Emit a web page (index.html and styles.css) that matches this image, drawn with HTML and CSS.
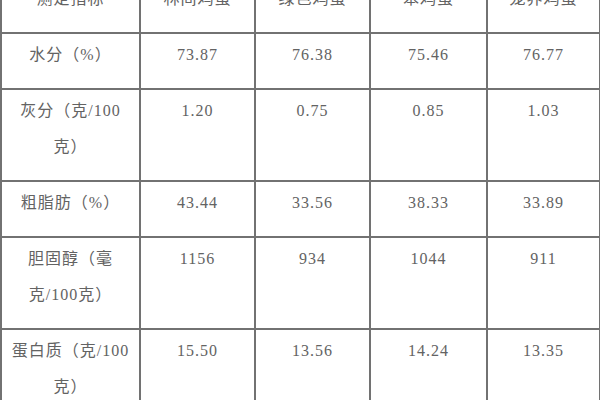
FILE: index.html
```html
<!DOCTYPE html>
<html lang="zh-CN">
<head>
<meta charset="utf-8">
<link rel="stylesheet" href="styles.css">
</head>
<body>
<table class="data">
  <colgroup>
    <col class="c1"><col class="c2"><col class="c3"><col class="c4"><col class="c5">
  </colgroup>
  <tr><td>测定指标</td><td>林间鸡蛋</td><td>绿色鸡蛋</td><td>笨鸡蛋</td><td>笼养鸡蛋</td></tr>
  <tr><td>水分（%）</td><td>73.87</td><td>76.38</td><td>75.46</td><td>76.77</td></tr>
  <tr><td>灰分（克/100<br>克）</td><td>1.20</td><td>0.75</td><td>0.85</td><td>1.03</td></tr>
  <tr><td>粗脂肪（%）</td><td>43.44</td><td>33.56</td><td>38.33</td><td>33.89</td></tr>
  <tr><td>胆固醇（毫<br>克/100克）</td><td>1156</td><td>934</td><td>1044</td><td>911</td></tr>
  <tr><td>蛋白质（克/100<br>克）</td><td>15.50</td><td>13.56</td><td>14.24</td><td>13.35</td></tr>
</table>
</body>
</html>
```
FILE: styles.css
```css
html, body {
  margin: 0;
  padding: 0;
  background: #ffffff;
}
body {
  overflow: hidden;
  height: 400px;
}
.data {
  margin-top: -24px;
  width: 599px;
  border-collapse: collapse;
  table-layout: fixed;
  font-family: "Liberation Serif", "Noto Sans CJK SC", serif;
  font-size: 16px;
  color: #636363;
}
.c1 { width: 139px; }
.c2 { width: 115px; }
.c3 { width: 115px; }
.c4 { width: 117px; }
.c5 { width: 113px; }
.data td {
  border: 2px solid #727272;
  text-align: center;
  vertical-align: top;
  line-height: 36px;
  padding: 3px 2px 15px;
  letter-spacing: 1px;
  white-space: nowrap;
}
```
